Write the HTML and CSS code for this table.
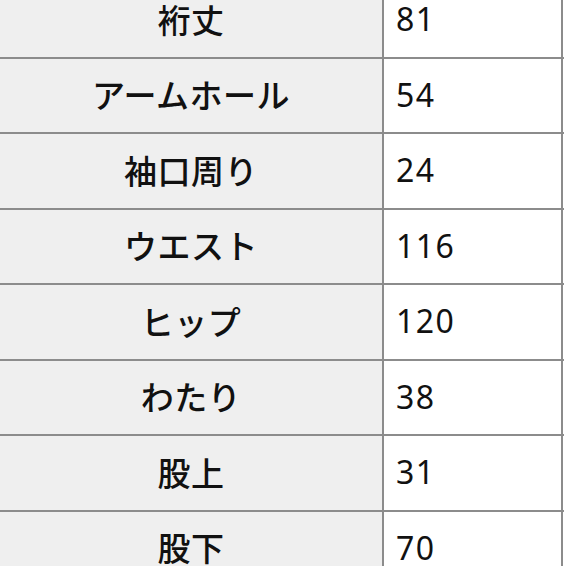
FILE: index.html
```html
<!DOCTYPE html>
<html lang="ja">
<head>
<meta charset="utf-8">
<link rel="stylesheet" href="styles.css">
</head>
<body>
<div class="sheet">
  <div class="row"><div class="key">裄丈</div><div class="val">81</div></div>
  <div class="row"><div class="key">アームホール</div><div class="val">54</div></div>
  <div class="row"><div class="key">袖口周り</div><div class="val">24</div></div>
  <div class="row"><div class="key">ウエスト</div><div class="val">116</div></div>
  <div class="row"><div class="key">ヒップ</div><div class="val">120</div></div>
  <div class="row"><div class="key">わたり</div><div class="val">38</div></div>
  <div class="row"><div class="key">股上</div><div class="val">31</div></div>
  <div class="row"><div class="key">股下</div><div class="val">70</div></div>
</div>
</body>
</html>
```
FILE: styles.css
```css
html, body {
  margin: 0;
  padding: 0;
  background: #ffffff;
  overflow: hidden;
}
body {
  height: 566px;
  font-family: "Noto Sans CJK JP", "Noto Sans", sans-serif;
  color: #111;
}
.sheet {
  width: 564px;
  margin-top: -17px;
  display: flex;
  flex-direction: column;
}
.row {
  display: grid;
  grid-template-columns: 384px 179px;
  height: 75.5px;
  box-sizing: border-box;
  border-bottom: 2px solid #8c8c8c;
}
.key {
  background: #efefef;
  border-right: 2px solid #8c8c8c;
  display: flex;
  align-items: center;
  justify-content: center;
  font-size: 33px;
  font-weight: 500;
  letter-spacing: 0.5px;
  padding-bottom: 2px;
}
.val {
  background: #fff;
  border-right: 2px solid #8c8c8c;
  display: flex;
  align-items: center;
  padding-left: 12px;
  padding-bottom: 2px;
  font-family: "Noto Sans", "Open Sans", sans-serif;
  font-size: 32px;
  letter-spacing: 1.5px;
  font-weight: 400;
}
```
